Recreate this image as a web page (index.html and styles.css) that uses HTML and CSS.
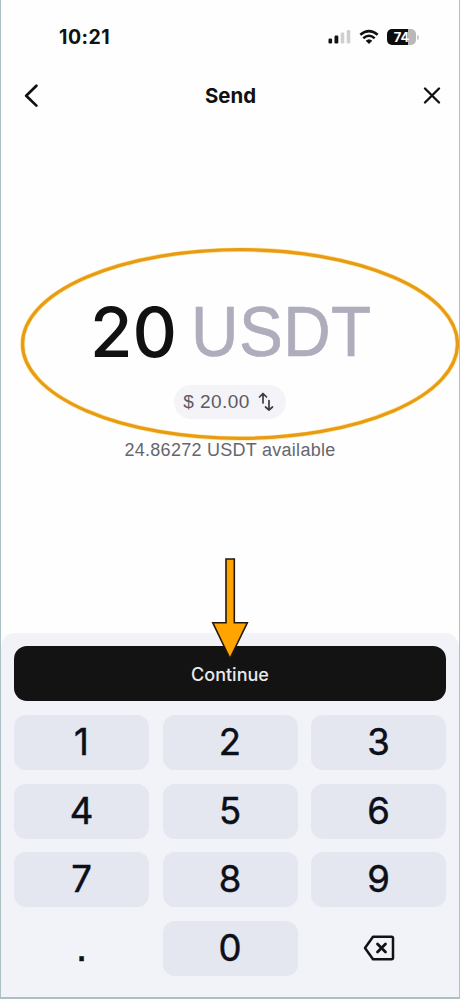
FILE: index.html
```html
<!DOCTYPE html>
<html lang="en">
<head>
<meta charset="utf-8">
<title>Send</title>
<link rel="stylesheet" href="styles.css">
</head>
<body>
<main class="screen">
  <div class="status">
    <span class="time">10:21</span>
    <div class="indicators">
      <svg class="signal" width="24" height="16" viewBox="0 0 24 16">
        <rect x="0.5" y="9.5" width="3.6" height="5" rx="1.2" fill="#111"/>
        <rect x="6.5" y="6.5" width="3.8" height="8" rx="1.2" fill="#111"/>
        <rect x="12.7" y="3.5" width="3.6" height="11" rx="1.2" fill="#cfcfcf"/>
        <rect x="18.7" y="1" width="3.6" height="13.5" rx="1.2" fill="#cfcfcf"/>
      </svg>
      <svg class="wifi" width="20" height="16" viewBox="0 0 20 16" fill="none" stroke="#111" stroke-width="2.5">
        <path d="M1.3 5.8Q10-1.5 18.7 5.8M4.3 9.2Q10 4.4 15.7 9.2"/>
        <path d="M6.7 11.7Q10 8.7 13.3 11.7L10 15.1Z" fill="#111" stroke="none"/>
      </svg>
      <span class="battery">74</span><span class="battery-tip"></span>
    </div>
  </div>
  <header class="bar">
    <svg width="14" height="24" viewBox="0 0 14 24" fill="none" stroke="#111" stroke-width="2.7" stroke-linecap="round" stroke-linejoin="round"><path d="M12.4 1.8 2.2 11.7 12.4 21.6"/></svg>
    <h1>Send</h1>
    <svg width="18" height="18" viewBox="0 0 18 18" fill="none" stroke="#111" stroke-width="2.3" stroke-linecap="round"><path d="M2 1.5 16 15.5M16 1.5 2 15.5"/></svg>
  </header>
  <section class="amount">
    <div class="value"><span class="number">20</span><span class="unit">USDT</span></div>
    <div class="fiat">
      <span>$ 20.00</span>
      <svg width="16" height="20" viewBox="0 0 16 20" fill="none" stroke="#3c3c44" stroke-width="1.7" stroke-linecap="round" stroke-linejoin="round"><path d="M5 11V2M1.5 5 5 1.5 8.5 5M11 8.5V17.8M7.5 15 11 18 14.5 15"/></svg>
    </div>
    <p class="available">24.86272 USDT available</p>
  </section>
  <section class="pad">
    <button class="continue">Continue</button>
    <div class="keys">
      <button class="key">1</button><button class="key">2</button><button class="key">3</button>
      <button class="key">4</button><button class="key">5</button><button class="key">6</button>
      <button class="key">7</button><button class="key">8</button><button class="key">9</button>
      <button class="key plain dot">.</button><button class="key">0</button>
      <button class="key plain" aria-label="Delete"><svg width="32" height="26" viewBox="0 0 32 26" fill="none" stroke="#101216" stroke-width="2.5" stroke-linecap="round" stroke-linejoin="round"><path d="M10 1.8H28.5Q30 1.8 30 3.3V22.7Q30 24.2 28.5 24.2H10L2 13Z"/><path d="M14.5 9 22.5 17M22.5 9 14.5 17" stroke-width="2.8"/></svg></button>
    </div>
  </section>
  <svg class="ring" width="442" height="196" viewBox="0 0 442 196" fill="none"><ellipse cx="220" cy="98" rx="217.5" ry="94.3" stroke="#ffe39a" stroke-width="4.6"/><ellipse cx="220" cy="98" rx="217.5" ry="94.3" stroke="#e89b14" stroke-width="3.2"/></svg>
  <svg class="arrow" width="38" height="104" viewBox="0 0 38 104"><path d="M15 2H23.3V65.8H36.3L19 101.5 1.8 65.8H15Z" fill="#ffa400" stroke="#24170e" stroke-width="1.6"/></svg>
</main>
</body>
</html>
```

FILE: styles.css
```css
* { box-sizing: border-box; }
body { margin: 0; }
button { border: 0; padding: 0; }
svg { display: block; }
.screen {
  position: relative;
  width: 460px;
  height: 999px;
  border: 1px solid #abc1c6;
  border-top: 0;
  background: #fefefe;
  color: #111;
  font-family: Inter, "Liberation Sans", sans-serif;
  overflow: hidden;
  display: flex;
  flex-direction: column;
}
.status {
  height: 74px;
  padding: 0 40px 0 58px;
  display: flex;
  align-items: center;
  justify-content: space-between;
}
.time { font-size: 19.5px; font-weight: 700; letter-spacing: .5px; }
.indicators { display: flex; align-items: center; }
.wifi { margin: 0 8px 0 7px; }
.battery {
  width: 29px;
  height: 16px;
  border-radius: 5px;
  background: linear-gradient(90deg, #0d0d0d 74%, #b9b9b9 74%);
  color: #fff;
  font-size: 13px;
  font-weight: 700;
  line-height: 16px;
  text-align: center;
}
.battery-tip { width: 2px; height: 5px; margin-left: 1px; border-radius: 0 2px 2px 0; background: #ccc; }
.bar {
  height: 44px;
  padding: 0 18px 0 23px;
  display: flex;
  align-items: center;
  justify-content: space-between;
}
h1 { margin: 0 0 1px; font-size: 20.4px; font-weight: 700; }
.amount {
  height: 515px;
  padding-top: 174px;
  display: flex;
  flex-direction: column;
  align-items: center;
}
.value {
  width: 284px;
  height: 80px;
  display: flex;
  gap: 14px;
  font-size: 69px;
  line-height: 80px;
  font-weight: 500;
}
.number { margin-left: 2px; }
.unit {
  color: #aeadbc;
  font: 71px/80px "Liberation Sans", sans-serif;
  letter-spacing: .5px;
  -webkit-text-stroke: .7px #aeadbc;
  transform: scaleX(.925);
  transform-origin: left;
}
.fiat {
  height: 34px;
  margin-top: 13px;
  padding: 0 12px 0 9px;
  border-radius: 17px;
  background: #f3f3f8;
  display: flex;
  align-items: center;
  gap: 8px;
  color: #5b5b63;
  font: 19px "Liberation Sans", sans-serif;
  letter-spacing: .45px;
}
.available {
  margin: 20px 0 0;
  color: #66666e;
  font: 18px/22px "Liberation Sans", sans-serif;
  letter-spacing: .27px;
  white-space: nowrap;
}
.pad {
  flex: 1;
  padding: 13px 13px 0;
  border-radius: 14px 14px 0 0;
  background: #f1f3f8;
  border-bottom: 1px solid #abc1c6;
}
.continue {
  display: block;
  width: 432px;
  height: 55px;
  border-radius: 13px;
  background: #131313;
  color: #e9e9e9;
  font: 500 18px/55px Inter, sans-serif;
  padding-top: 1px;
}
.keys {
  margin-top: 14px;
  display: grid;
  grid-template-columns: repeat(3, 135px);
  grid-auto-rows: 55px;
  justify-content: space-between;
  row-gap: 13.6px;
}
.key {
  display: flex;
  align-items: center;
  justify-content: center;
  border-radius: 12px;
  background: #e4e7f0;
  color: #0d0f18;
  font: 400 36.5px/55px Inter, sans-serif;
  -webkit-text-stroke: .5px #0d0f18;
}
.plain { background: none; }
.dot { font-family: "Liberation Sans", sans-serif; font-size: 42px; line-height: 45px; padding-bottom: 4px; }
.ring { position: absolute; left: 19px; top: 246px; }
.arrow { position: absolute; left: 210px; top: 557px; }
```
